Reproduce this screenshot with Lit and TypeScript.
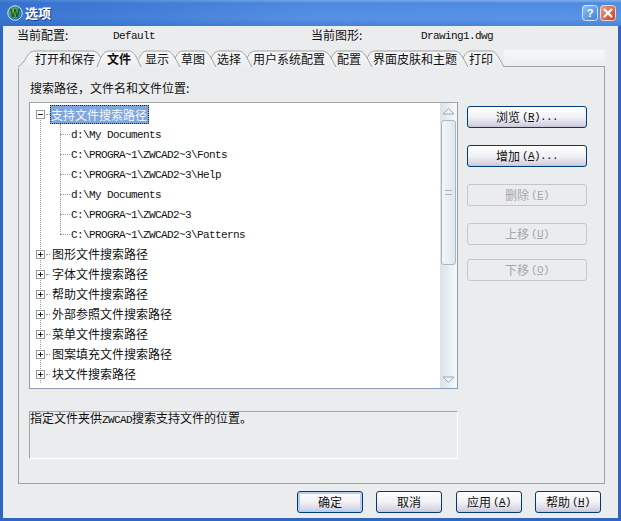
import { LitElement, html, css, svg } from "lit";
import { customElement } from "lit/decorators.js";

const TABS: [string, boolean][] = [
  ["打开和保存", false], ["文件", true], ["显示", false], ["草图", false], ["选择", false],
  ["用户系统配置", false], ["配置", false], ["界面皮肤和主题", false], ["打印", false],
];
const PATHS = ["d:\\My Documents", "C:\\PROGRA~1\\ZWCAD2~3\\Fonts", "C:\\PROGRA~1\\ZWCAD2~3\\Help", "d:\\My Documents", "C:\\PROGRA~1\\ZWCAD2~3", "C:\\PROGRA~1\\ZWCAD2~3\\Patterns"];
const GROUPS = ["图形文件搜索路径", "字体文件搜索路径", "帮助文件搜索路径", "外部参照文件搜索路径", "菜单文件搜索路径", "图案填充文件搜索路径", "块文件搜索路径"];

function tabShape(w: number, i: number, selected: boolean) {
  const h = 17;
  let d: string;
  if (selected) d = `M-4 ${h}C-1 9 2 1 8 1H${w - 10}C${w - 5} 1 ${w - 2} 8 ${w + 2} ${h}`;
  else if (i === 0) d = `M-11 ${h}C-7 14 -5 12 -3 8C-1 4 2 1 6 1H${w - 8}C${w - 3} 1 ${w} 8 ${w + 5} ${h}`;
  else d = `M0 9C1 5 4 1 8 1H${w - 8}C${w - 3} 1 ${w} 8 ${w + 5} ${h}`;
  return svg`<svg class="shape" width=${w} height=${h + 1} viewBox="0 0 ${w} ${h + 1}">
    <path d=${d + `V${h + 1}H${selected ? -4 : i === 0 ? -11 : 0}Z`} fill=${selected ? "url(#selfill)" : "url(#tabfill)"} stroke="none"></path>
    <path d=${d} fill="none" stroke="#9da3a6"></path></svg>`;
}

@customElement("app-root")
export class AppRoot extends LitElement {
  static styles = css`
    :host { display: block; width: 621px; height: 521px; overflow: hidden; font: 12px/16px "Noto Sans CJK SC", sans-serif; color: #111; }
    .m { font-family: "Liberation Mono", monospace; font-size: 11px; letter-spacing: -0.6px; }
    .win { width: 621px; height: 521px; display: flex; flex-direction: column; background: #2f66c4; }
    .title { height: 26px; flex: none; display: flex; align-items: center; padding: 0 5px 0 7px; gap: 2px;
      background: linear-gradient(90deg, rgba(30,90,190,.55), rgba(60,120,215,.15) 50%, rgba(120,170,240,0)), linear-gradient(#7fb0ee, #4f8ce0 12%, #5a95e6 70%, #4a84d8); }
    .title .t { color: #fff; font-size: 13px; font-weight: 700; text-shadow: 1px 1px 0 #1d3f86; flex: 1; }
    .tbtns { display: flex; gap: 2px; }
    .body { flex: 1; margin: 0 3px 3px; background: #ebeced; display: flex; flex-direction: column; min-height: 0; }
    .info { height: 24px; flex: none; display: flex; align-items: flex-start; padding: 1px 0 0 14px; box-sizing: border-box; }
    .info .k { width: 96px; }
    .info .v { width: 198px; }
    .info .k2 { width: 110px; }
    .info .m { padding-top: 1px; }
    .tabs { height: 17px; flex: none; margin: 0 13px 0 15px; display: flex; }
    .lead { width: 11px; flex: none; }
    .tail { flex: 1; border-bottom: 1px solid #9da3a6; margin-left: 5px; background: linear-gradient(#f6f7f8, #ebeced); box-sizing: border-box; }
    .tab { position: relative; flex: none; box-sizing: border-box; height: 17px; padding: 1px 6px 0; line-height: 16px; white-space: nowrap; text-align: center; }
    .tab.sel { font-weight: 700; z-index: 20; text-align: left; }
    .tab span { position: relative; }
    .shape { position: absolute; left: 0; top: 0; overflow: visible; }
    .panel { height: 417px; flex: none; margin: 0 13px 0 15px; box-sizing: border-box; border: 1px solid #9da3a6; border-top: 0; padding: 13px 0 0 10px; }
    .plabel { height: 22px; line-height: 16px; padding-left: 1px; }
    .main { display: flex; gap: 9px; }
    .left { width: 429px; flex: none; }
    .tree { height: 287px; box-sizing: border-box; display: flex; background: #fff; border: 1px solid #8a9fb4; border-top-color: #a3a7a8; overflow: hidden; }
    .rows { position: relative; flex: 1; padding-top: 1px; overflow: hidden; }
    .row { position: relative; height: 20px; display: flex; align-items: center; white-space: nowrap; }
    .row.top { padding-left: 21px; }
    .row.top > .lbl { padding: 0 1px; }
    .row.top::before { content: ""; position: absolute; left: 16px; width: 4px; top: 10px; border-top: 1px dotted #999; }
    .row.sel .lbl { background: #7fa7dd; color: #f4f7fc; outline: 1px dotted #223; outline-offset: -1px; height: 19px; line-height: 19px; padding: 0 2px 0 1px; margin-left: -1px; }
    .row.child { padding-left: 41px; padding-top: 2px; box-sizing: border-box; }
    .row.child::before { content: ""; position: absolute; left: 30px; width: 10px; top: 10px; border-top: 1px dotted #999; }
    .exp { position: absolute; left: 6px; top: 6px; width: 9px; height: 9px; box-sizing: border-box; border: 1px solid #8f9aa0; background: #fff; z-index: 2; }
    .exp svg { display: block; }
    .vline { position: absolute; border-left: 1px dotted #999; width: 0; }
    .v1 { left: 10px; top: 11px; height: 269px; }
    .v2 { left: 30px; top: 21px; height: 110px; }
    .sb { width: 17px; flex: none; display: flex; flex-direction: column; background: linear-gradient(90deg, #d9e3ea, #f7fafb); }
    .arrow { height: 16px; flex: none; display: flex; justify-content: center; align-items: center; }
    .thumb { margin: 1px 1px 0; height: 145px; box-sizing: border-box; border: 1px solid #a9b6c4; border-radius: 3px; background: linear-gradient(90deg, #f3f6f8, #dfe6ec); display: flex; align-items: center; justify-content: center; flex: none; }
    .grip { width: 7px; height: 3px; border-top: 1px solid #a9b6c4; border-bottom: 1px solid #a9b6c4; }
    .gap { flex: 1; }
    .desc { margin-top: 22px; height: 48px; box-sizing: border-box; border: 1px solid #fff; border-top-color: #a3a7a8; border-left-color: #a3a7a8; line-height: 12px; white-space: nowrap; }
    .btns { width: 120px; flex: none; padding-top: 4px; display: flex; flex-direction: column; }
    .btn { height: 22px; box-sizing: border-box; display: flex; align-items: center; justify-content: center; border: 1px solid #003c74; border-radius: 3px; background: linear-gradient(#fefeff, #f2f2f6 50%, #d5d3e2 90%, #c3c3d4); white-space: pre; color: #111; }
    .btn .m { margin-left: 2px; }
    .btn.dis { border-color: #c3c7cb; background: #ebeced; color: #a4a8ab; }
    .btns .btn { width: 120px; }
    .b1 { margin-bottom: 17px; }
    .b2 { margin-bottom: 17px; }
    .b3 { margin-bottom: 17px; }
    .b4 { margin-bottom: 14px; }
    .foot { flex: 1; display: flex; justify-content: flex-end; align-items: flex-start; padding: 7px 17px 0 0; }
    .foot .btn { width: 66px; margin-left: 13px; height: 22px; }
    .foot .btn.wide { margin-left: 14px; }
    .foot .def { box-shadow: inset 0 0 0 2px #b4cff2; }
  `;

  private btn(cjk: string, key: string, dots: boolean, cls: string) {
    return html`<div class="btn ${cls}">${cjk}<span class="m">(<u>${key}</u>)${dots ? "..." : ""}</span></div>`;
  }

  render() {
    const widths = [72, 38, 36, 36, 36, 84, 36, 96, 36];
    const n = TABS.length;
    return html`
      <div class="win">
        <div class="title">
          <svg width="16" height="16" viewBox="0 0 16 16">
            <defs><radialGradient id="g" cx=".45" cy=".45" r=".55"><stop offset="0" stop-color="#b5dc6a"></stop><stop offset=".5" stop-color="#4fa24a"></stop><stop offset=".8" stop-color="#2a7fb0"></stop><stop offset="1" stop-color="#14507f"></stop></radialGradient></defs>
            <circle cx="8" cy="8" r="7.2" fill="url(#g)" stroke="#cfe6f4" stroke-width="1"></circle>
            <text x="8" y="11.5" text-anchor="middle" font-family="Liberation Sans" font-size="10" font-weight="700" fill="#14532a">W</text>
          </svg>
          <div class="t">选项</div>
          <div class="tbtns">
            <svg width="16" height="16" viewBox="0 0 16 16">
              <defs><linearGradient id="hb" x1="0" y1="0" x2="1" y2="1"><stop offset="0" stop-color="#8fc0f5"></stop><stop offset="1" stop-color="#3f7fd8"></stop></linearGradient></defs>
              <rect x=".5" y=".5" width="15" height="15" rx="3" fill="url(#hb)" stroke="#d5e6fa"></rect>
              <text x="8" y="12" text-anchor="middle" font-family="Liberation Sans" font-size="11" font-weight="700" fill="#fff">?</text>
            </svg>
            <svg width="16" height="16" viewBox="0 0 16 16">
              <defs><linearGradient id="cb" x1="0" y1="0" x2="1" y2="1"><stop offset="0" stop-color="#f0a088"></stop><stop offset="1" stop-color="#c83c1c"></stop></linearGradient></defs>
              <rect x=".5" y=".5" width="15" height="15" rx="3" fill="url(#cb)" stroke="#f2d8d2"></rect>
              <path d="M4.5 4.5l7 7M11.5 4.5l-7 7" stroke="#fff" stroke-width="2.2" stroke-linecap="round"></path>
            </svg>
          </div>
        </div>
        <div class="body">
          <div class="info">
            <div class="k">当前配置:</div><div class="v m">Default</div>
            <div class="k2">当前图形:</div><div class="m">Drawing1.dwg</div>
          </div>
          <svg width="0" height="0" style="position:absolute"><defs>
            <linearGradient id="tabfill" x1="0" y1="0" x2="0" y2="1"><stop offset="0" stop-color="#f6f7f8"></stop><stop offset="1" stop-color="#ebeced"></stop></linearGradient>
            <linearGradient id="selfill" x1="0" y1="0" x2="0" y2="1"><stop offset="0" stop-color="#fbfbfc"></stop><stop offset="1" stop-color="#ebeced"></stop></linearGradient>
          </defs></svg>
          <div class="tabs">
            <div class="lead"></div>
            ${TABS.map(([t, sel], i) => html`
              <div class="tab ${sel ? "sel" : ""}" style="width:${widths[i]}px;z-index:${sel ? 20 : n - i}">
                ${tabShape(widths[i], i, sel)}<span>${t}</span>
              </div>`)}
            <div class="tail"></div>
          </div>
          <div class="panel">
            <div class="plabel">搜索路径，文件名和文件位置:</div>
            <div class="main">
              <div class="left">
                <div class="tree">
                  <div class="rows">
                    <div class="vline v1"></div>
                    <div class="vline v2"></div>
                    <div class="row top sel">
                      <div class="exp"><svg width="7" height="7"><path d="M1 3.5H6" stroke="#222"></path></svg></div>
                      <span class="lbl">支持文件搜索路径</span>
                    </div>
                    ${PATHS.map((p) => html`<div class="row child m">${p}</div>`)}
                    ${GROUPS.map((g) => html`<div class="row top">
                      <div class="exp"><svg width="7" height="7"><path d="M1 3.5H6M3.5 1V6" stroke="#222"></path></svg></div>
                      <span class="lbl">${g}</span>
                    </div>`)}
                  </div>
                  <div class="sb">
                    <div class="arrow"><svg width="13" height="8"><path d="M1 7L6.5 1.5L12 7Z" fill="#eef3f6" stroke="#9aa8b4"></path></svg></div>
                    <div class="thumb"><div class="grip"></div></div>
                    <div class="gap"></div>
                    <div class="arrow"><svg width="13" height="8"><path d="M1 1L6.5 6.5L12 1Z" fill="#eef3f6" stroke="#9aa8b4"></path></svg></div>
                  </div>
                </div>
                <div class="desc">指定文件夹供<span class="m">ZWCAD</span>搜索支持文件的位置。</div>
              </div>
              <div class="btns">
                ${this.btn("浏览", "R", true, "b1")}
                ${this.btn("增加", "A", true, "b2")}
                ${this.btn("删除", "E", false, "dis b3")}
                ${this.btn("上移", "U", false, "dis b4")}
                ${this.btn("下移", "O", false, "dis")}
              </div>
            </div>
          </div>
          <div class="foot">
            <div class="btn def">确定</div>
            <div class="btn">取消</div>
            ${this.btn("应用", "A", false, "wide")}
            ${this.btn("帮助", "H", false, "")}
          </div>
        </div>
      </div>`;
  }
}
